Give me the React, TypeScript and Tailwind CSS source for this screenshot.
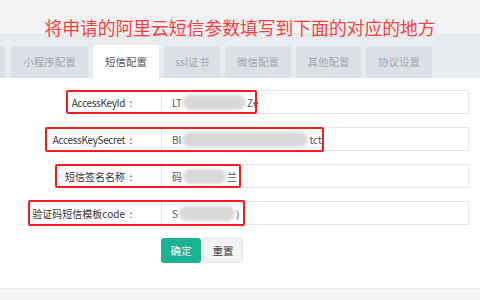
import React from "react";

type Row = {
  label: string;
  pre: string;
  blob: number;
  post: string;
  box: string;
  tight?: boolean;
};

const tabs = [
  { name: "小程序配置", w: "w-[77px]" },
  { name: "短信配置", w: "w-[66px]", active: true },
  { name: "ssl证书", w: "w-[56px]" },
  { name: "微信配置", w: "w-[66px]" },
  { name: "其他配置", w: "w-[65px]" },
  { name: "协议设置", w: "w-[66px]" },
];

const rows: Row[] = [
  { label: "AccessKeyId", pre: "LT", blob: 63, post: "Ze", box: "left-[66px] w-[191px] top-0 h-[24px]", tight: true },
  { label: "AccessKeySecret", pre: "Bl", blob: 126, post: "tct", box: "left-[45px] w-[279px] top-0 h-[25px]", tight: true },
  { label: "短信签名名称", pre: "码", blob: 43, post: "兰", box: "left-[55px] w-[186px] top-0 h-[24px]" },
  { label: "验证码短信模板code", pre: "S", blob: 56, post: ")", box: "left-[28px] w-[217px] top-[-1px] h-[26px]" },
];

function FormRow({ row }: { row: Row }) {
  return (
    <div className="relative flex h-[24px] items-center">
      <label className="flex w-[161px] shrink-0 justify-end pr-[24px] text-[10px] text-[#333]">
        <span className={row.tight ? "tracking-[-0.35px]" : ""}>{row.label}</span>
        <span className="w-[12px] text-center">:</span>
      </label>
      <div className="mr-[11px] flex h-full flex-1 items-center border border-[#e5e6e7] pl-[10px] text-[10px] text-[#555]">
        <span>{row.pre}</span>
        <span
          className="mx-[1px] inline-block h-[15px] rounded-full bg-[#d9d9d9] blur-[1.5px]"
          style={{ width: row.blob }}
        />
        <span>{row.post}</span>
      </div>
      <div className={`pointer-events-none absolute rounded-[2px] border-2 border-[#f31d1d] ${row.box}`} />
    </div>
  );
}

export default function App() {
  return (
    <div
      className="flex h-[300px] w-[480px] flex-col overflow-hidden bg-[#f3f3f4]"
      style={{ fontFamily: '"Noto Sans CJK SC", "Liberation Sans", sans-serif' }}
    >
      <div className="flex h-[33px] shrink-0 items-end justify-center bg-[#f1f3f5]">
        <h1 className="relative top-[4px] text-[17.8px] leading-[20px] font-normal text-[#ff3b3b]">
          将申请的阿里云短信参数填写到下面的对应的地方
        </h1>
      </div>

      <div className="flex h-[45px] shrink-0 items-end gap-[5px] bg-[#e9ecef]">
        <div className="h-[32px] w-[5px] bg-[#dbe1e6]" />
        {tabs.map((t, i) => (
          <div
            key={t.name}
            className={`flex items-center justify-center rounded-t-[3px] text-[10.5px] ${t.w} ${
              i === 0 ? "ml-[1px]" : ""
            } ${t.active ? "h-[33px] bg-white text-[#555]" : "h-[32px] bg-[#dbe1e6] text-[#a2a9ae]"}`}
          >
            {t.name}
          </div>
        ))}
      </div>

      <div className="flex h-[210px] shrink-0 flex-col gap-[13px] bg-white pt-[12px]">
        {rows.map((r) => (
          <FormRow key={r.label} row={r} />
        ))}
        <div className="ml-[161px] flex gap-[2px]">
          <button className="h-[25px] w-[40px] rounded-[3px] bg-[#1ab394] text-[10.5px] text-white">
            确定
          </button>
          <button className="h-[25px] w-[40px] rounded-[3px] border border-[#e7e7e7] bg-[#f3f3f3] text-[10.5px] text-[#333]">
            重置
          </button>
        </div>
      </div>

      <div className="flex-1 border-t border-[#e7eaec] bg-[#f3f3f4]" />
    </div>
  );
}
